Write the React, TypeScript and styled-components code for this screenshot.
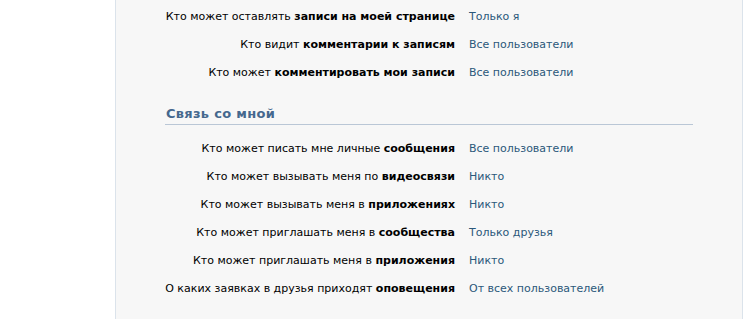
import styled, { createGlobalStyle } from "styled-components";

type Setting = {
  plain: string;
  bold: string;
  value: string;
};

const wallSettings: Setting[] = [
  { plain: "Кто может оставлять", bold: "записи на моей странице", value: "Только я" },
  { plain: "Кто видит", bold: "комментарии к записям", value: "Все пользователи" },
  { plain: "Кто может", bold: "комментировать мои записи", value: "Все пользователи" },
];

const contactSettings: Setting[] = [
  { plain: "Кто может писать мне личные", bold: "сообщения", value: "Все пользователи" },
  { plain: "Кто может вызывать меня по", bold: "видеосвязи", value: "Никто" },
  { plain: "Кто может вызывать меня в", bold: "приложениях", value: "Никто" },
  { plain: "Кто может приглашать меня в", bold: "сообщества", value: "Только друзья" },
  { plain: "Кто может приглашать меня в", bold: "приложения", value: "Никто" },
  { plain: "О каких заявках в друзья приходят", bold: "оповещения", value: "От всех пользователей" },
];

const GlobalStyle = createGlobalStyle`
  html, body {
    margin: 0;
    padding: 0;
    background: #ffffff;
  }

  body {
    font-family: "DejaVu Sans", Verdana, sans-serif;
    font-size: 11px;
    color: #000000;
  }
`;

export default function App() {
  return (
    <>
      <GlobalStyle />
      <Page>
        <Panel>
          <SettingsList>
            {wallSettings.map((s) => (
              <SettingRow key={s.bold} setting={s} />
            ))}
          </SettingsList>

          <SectionHeader>Связь со мной</SectionHeader>

          <SettingsList>
            {contactSettings.map((s) => (
              <SettingRow key={s.bold} setting={s} />
            ))}
          </SettingsList>
        </Panel>
      </Page>
    </>
  );
}

function SettingRow({ setting }: { setting: Setting }) {
  return (
    <Row>
      <Label>
        {setting.plain} <b>{setting.bold}</b>
      </Label>
      <Value href="#">{setting.value}</Value>
    </Row>
  );
}

const Page = styled.div`
  min-height: 319px;
  padding-left: 115px;
  display: flex;
`;

const Panel = styled.div`
  width: 628px;
  min-height: 319px;
  border-left: 1px solid #dbe3eb;
  border-right: 1px solid #dbe3eb;
  background: #f7f7f7;
  padding-top: 3px;
  box-sizing: border-box;
`;

const SettingsList = styled.div`
  display: flex;
  flex-direction: column;
`;

const Row = styled.div`
  display: grid;
  grid-template-columns: 339px auto;
  column-gap: 14px;
  padding: 7px 0;
  line-height: 14px;
`;

const Label = styled.div`
  text-align: right;
  white-space: nowrap;

  b {
    font-weight: 700;
  }
`;

const Value = styled.a`
  color: #2b587a;
  text-decoration: none;
  white-space: nowrap;
`;

const SectionHeader = styled.div`
  margin: 19px 0 10px 49px;
  width: 527px;
  padding: 0 0 2px 1px;
  border-bottom: 1px solid #bac7d6;
  color: #45688e;
  font-size: 13px;
  font-weight: 700;
  letter-spacing: 0.3px;
  line-height: 16px;
`;
